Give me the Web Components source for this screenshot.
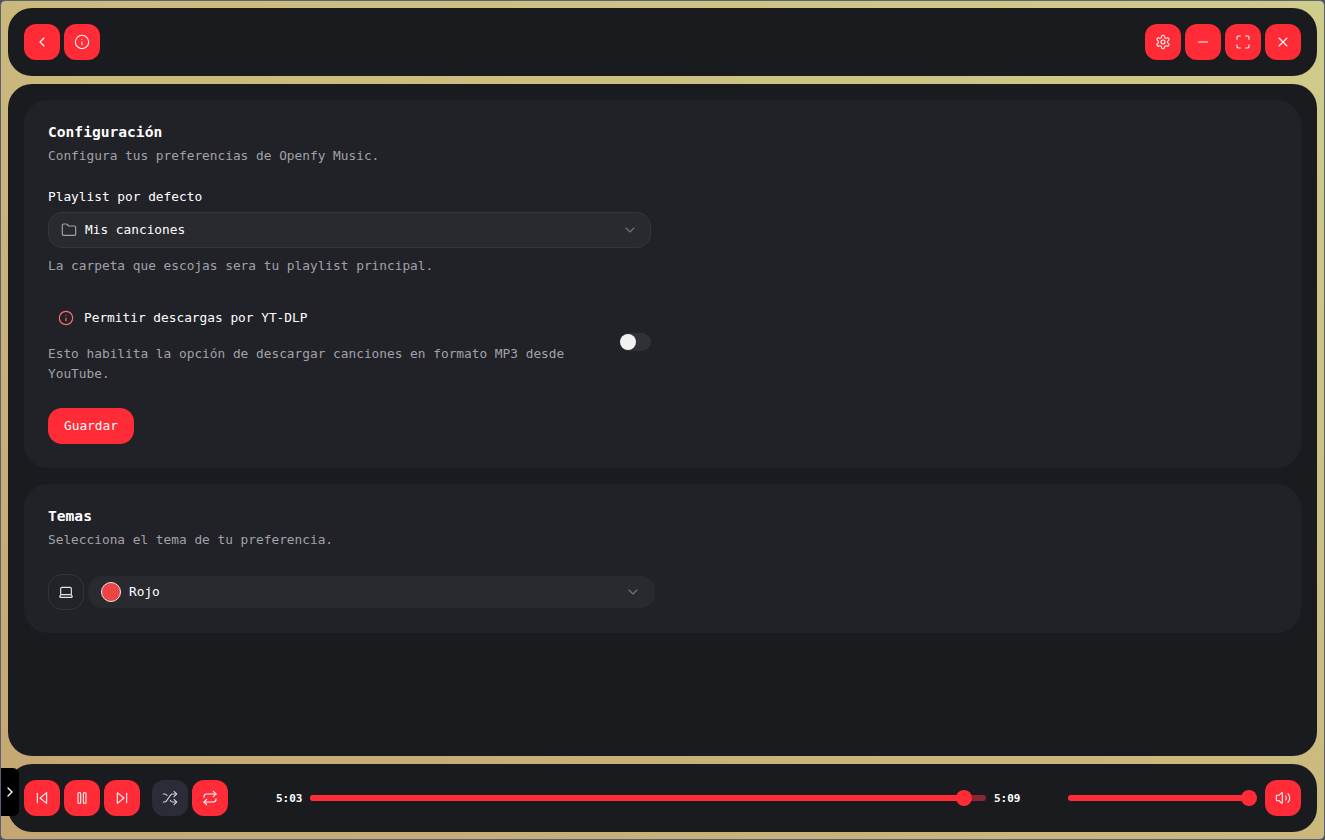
<!DOCTYPE html>
<html lang="es">
<head>
<meta charset="utf-8">
<title>Openfy Music</title>
<style>
  html, body { margin: 0; height: 100%; background: #4a4f6a; overflow: hidden; }
  body { font-family: "DejaVu Sans Mono", "Liberation Mono", monospace; font-size: 12.8px; }
</style>
</head>
<body>
<app-window>
  <top-bar slot="top"></top-bar>
  <div slot="main" style="display:contents">
    <settings-card heading="Configuración" description="Configura tus preferencias de Openfy Music.">
      <config-form></config-form>
    </settings-card>
    <settings-card heading="Temas" description="Selecciona el tema de tu preferencia." style="padding-bottom:23px">
      <theme-picker></theme-picker>
    </settings-card>
  </div>
  <player-bar slot="bottom"></player-bar>
</app-window>

<script>
  // lucide style icons, 24 grid
  const ICONS = {
    back: '<path d="m15 18-6-6 6-6"/>',
    forward: '<path d="m9 18 6-6-6-6"/>',
    down: '<path d="m6 9 6 6 6-6"/>',
    info: '<circle cx="12" cy="12" r="10"/><path d="M12 16v-4"/><path d="M12 8h.01"/>',
    gear: '<path d="M12.22 2h-.44a2 2 0 0 0-2 2v.18a2 2 0 0 1-1 1.73l-.43.25a2 2 0 0 1-2 0l-.15-.08a2 2 0 0 0-2.73.73l-.22.38a2 2 0 0 0 .73 2.73l.15.1a2 2 0 0 1 1 1.72v.51a2 2 0 0 1-1 1.74l-.15.09a2 2 0 0 0-.73 2.73l.22.38a2 2 0 0 0 2.73.73l.15-.08a2 2 0 0 1 2 0l.43.25a2 2 0 0 1 1 1.73V20a2 2 0 0 0 2 2h.44a2 2 0 0 0 2-2v-.18a2 2 0 0 1 1-1.73l.43-.25a2 2 0 0 1 2 0l.15.08a2 2 0 0 0 2.73-.73l.22-.39a2 2 0 0 0-.73-2.73l-.15-.08a2 2 0 0 1-1-1.74v-.5a2 2 0 0 1 1-1.74l.15-.09a2 2 0 0 0 .73-2.73l-.22-.38a2 2 0 0 0-2.73-.73l-.15.08a2 2 0 0 1-2 0l-.43-.25a2 2 0 0 1-1-1.73V4a2 2 0 0 0-2-2z"/><circle cx="12" cy="12" r="3"/>',
    minus: '<path d="M5 12h14"/>',
    full: '<path d="M8 3H5a2 2 0 0 0-2 2v3"/><path d="M21 8V5a2 2 0 0 0-2-2h-3"/><path d="M3 16v3a2 2 0 0 0 2 2h3"/><path d="M16 21h3a2 2 0 0 0 2-2v-3"/>',
    close: '<path d="M18 6 6 18"/><path d="m6 6 12 12"/>',
    folder: '<path d="M20 20a2 2 0 0 0 2-2V8a2 2 0 0 0-2-2h-7.9a2 2 0 0 1-1.69-.9L9.6 3.9A2 2 0 0 0 7.93 3H4a2 2 0 0 0-2 2v13a2 2 0 0 0 2 2Z"/>',
    laptop: '<path d="M20 16V7a2 2 0 0 0-2-2H6a2 2 0 0 0-2 2v9m16 0H4m16 0 1.28 2.55a1 1 0 0 1-.9 1.45H3.62a1 1 0 0 1-.9-1.45L4 16"/>',
    prev: '<path d="M19 20 9 12l10-8v16Z"/><path d="M5 19V5"/>',
    next: '<path d="m5 4 10 8-10 8V4Z"/><path d="M19 5v14"/>',
    pause: '<rect x="14" y="4" width="4" height="16" rx="1"/><rect x="6" y="4" width="4" height="16" rx="1"/>',
    shuffle: '<path d="M2 18h1.4c1.3 0 2.5-.6 3.3-1.7l6.1-8.6c.7-1.1 2-1.7 3.3-1.7H22"/><path d="m18 2 4 4-4 4"/><path d="M2 6h1.9c1.5 0 2.9.9 3.6 2.2"/><path d="M22 18h-5.9c-1.3 0-2.6-.7-3.3-1.8l-.5-.8"/><path d="m18 14 4 4-4 4"/>',
    repeat: '<path d="m17 2 4 4-4 4"/><path d="M3 11v-1a4 4 0 0 1 4-4h14"/><path d="m7 22-4-4 4-4"/><path d="M21 13v1a4 4 0 0 1-4 4H3"/>',
    volume: '<path d="M11 4.7a.7.7 0 0 0-1.2-.5L6.4 7.6A1.4 1.4 0 0 1 5.4 8H3a1 1 0 0 0-1 1v6a1 1 0 0 0 1 1h2.4a1.4 1.4 0 0 1 1 .4l3.4 3.4a.7.7 0 0 0 1.2-.5z"/><path d="M16 9a5 5 0 0 1 0 6"/><path d="M19.4 18.4a9 9 0 0 0 0-12.8"/>'
  };

  class AppIcon extends HTMLElement {
    connectedCallback() {
      const size = this.getAttribute("size") || 16;
      this.attachShadow({ mode: "open" }).innerHTML = `
        <style>:host { display: inline-flex; flex: none; } svg { display: block; }</style>
        <svg width="${size}" height="${size}" viewBox="0 0 24 24" fill="none" stroke="currentColor"
          stroke-width="${this.getAttribute("stroke") || 2}" stroke-linecap="round" stroke-linejoin="round">${ICONS[this.getAttribute("name")]}</svg>`;
    }
  }

  class IconButton extends HTMLElement {
    connectedCallback() {
      this.attachShadow({ mode: "open" }).innerHTML = `
        <style>
          :host {
            display: flex; flex: none; width: 36px; height: 36px; box-sizing: border-box;
            align-items: center; justify-content: center;
            border-radius: 12px; background: #ff2b36; color: #fff;
          }
          :host([muted]) { background: #2a2c38; color: #d4d4d8; }
        </style>
        <app-icon name="${this.getAttribute("icon")}" size="16" stroke="1.6"></app-icon>`;
    }
  }

  class AppWindow extends HTMLElement {
    constructor() {
      super();
      this.attachShadow({ mode: "open" }).innerHTML = `
        <style>
          :host {
            display: flex; flex-direction: column; gap: 8px; box-sizing: border-box;
            height: 840px; padding: 7px; border: 1px solid #5a6076; border-radius: 5px; position: relative;
            background: linear-gradient(to top right, #c5a672, #cbb97c 50%, #cfcd8b) padding-box;
          }
          .bar { flex: none; height: 68px; border-radius: 24px; background: #1a1b1f; }
          main {
            flex: 1; min-height: 0; display: flex; flex-direction: column; gap: 16px;
            padding: 16px; border-radius: 24px; background: #1a1b1f;
          }
        </style>
        <div class="bar"><slot name="top"></slot></div>
        <main><slot name="main"></slot></main>
        <div class="bar"><slot name="bottom"></slot></div>`;
    }
  }

  class TopBar extends HTMLElement {
    constructor() {
      super();
      this.attachShadow({ mode: "open" }).innerHTML = `
        <style>
          :host { display: flex; height: 100%; align-items: center; justify-content: space-between; padding: 0 16px; box-sizing: border-box; }
          div { display: flex; gap: 4px; }
        </style>
        <div><icon-button icon="back"></icon-button><icon-button icon="info"></icon-button></div>
        <div>
          <icon-button icon="gear"></icon-button><icon-button icon="minus"></icon-button>
          <icon-button icon="full"></icon-button><icon-button icon="close"></icon-button>
        </div>`;
    }
  }

  class SettingsCard extends HTMLElement {
    connectedCallback() {
      this.attachShadow({ mode: "open" }).innerHTML = `
        <style>
          :host { display: block; padding: 24px; border-radius: 24px; background: #212227; }
          h2 { margin: 0; font-size: 14.6px; line-height: 16px; font-weight: 700; color: #fff; }
          p { margin: 8px 0 0; font-size: 12.8px; line-height: 16px; color: #a1a1aa; }
        </style>
        <h2>${this.getAttribute("heading")}</h2>
        <p>${this.getAttribute("description")}</p>
        <slot></slot>`;
    }
  }

  class ConfigForm extends HTMLElement {
    constructor() {
      super();
      this.attachShadow({ mode: "open" }).innerHTML = `
        <style>
          :host { display: block; width: 603px; padding-top: 25px; }
          label { display: block; line-height: 16px; color: #fff; }
          .select {
            display: flex; align-items: center; gap: 8px; height: 36px; box-sizing: border-box;
            margin-top: 7px; padding: 0 12px; border: 1px solid #34353b; border-radius: 14px;
            background: #292a30; color: #fff;
          }
          .select app-icon:first-child { color: #a1a1aa; }
          .select span { flex: 1; padding-bottom: 2px; }
          .select .chev { color: #71717a; }
          .hint { margin: 10px 0 0; line-height: 16px; color: #a1a1aa; }
          .row { display: flex; align-items: center; justify-content: space-between; margin-top: 26px; }
          .title { display: flex; align-items: center; gap: 10px; padding-left: 10px; line-height: 36px; color: #fff; }
          .title app-icon { color: #ff6b74; }
          .desc { margin: 8px 0 0; width: 530px; line-height: 20px; color: #a1a1aa; }
          .switch { flex: none; width: 31px; height: 18px; border-radius: 9px; background: #303137; display: flex; align-items: center; }
          .knob { width: 16px; height: 16px; border-radius: 50%; background: #f1f1f1; }
          button {
            display: block; margin-top: 24px; height: 36px; padding: 0 16px 2px; border: 0; border-radius: 14px;
            background: #ff2b36; color: #fff; font: inherit;
          }
        </style>
        <label>Playlist por defecto</label>
        <div class="select">
          <app-icon name="folder" size="16" stroke="1.75"></app-icon>
          <span>Mis canciones</span>
          <app-icon class="chev" name="down" size="16" stroke="1.75"></app-icon>
        </div>
        <p class="hint">La carpeta que escojas sera tu playlist principal.</p>
        <div class="row">
          <div>
            <div class="title"><app-icon name="info" size="16" stroke="1.75"></app-icon>Permitir descargas por YT-DLP</div>
            <p class="desc">Esto habilita la opción de descargar canciones en formato MP3 desde YouTube.</p>
          </div>
          <div class="switch"><div class="knob"></div></div>
        </div>
        <button>Guardar</button>`;
    }
  }

  class ThemePicker extends HTMLElement {
    constructor() {
      super();
      this.attachShadow({ mode: "open" }).innerHTML = `
        <style>
          :host { display: flex; align-items: center; gap: 4px; width: 607px; padding-top: 26px; }
          .mode {
            flex: none; width: 36px; height: 36px; box-sizing: border-box; display: flex; align-items: center; justify-content: center;
            border: 1px solid #34353b; border-radius: 14px; background: #222328; color: #e4e4e7;
          }
          .select {
            flex: 1; display: flex; align-items: center; gap: 8px; height: 32px; padding: 0 14px 0 13px;
            border-radius: 14px; background: #292a30; color: #fff;
          }
          .dot { width: 18px; height: 18px; border: 1px solid #e5e5e5; border-radius: 50%; background: #ef4444; }
          .select span { flex: 1; padding-bottom: 2px; }
          .chev { color: #71717a; }
        </style>
        <div class="mode"><app-icon name="laptop" size="16" stroke="1.75"></app-icon></div>
        <div class="select">
          <div class="dot"></div>
          <span>Rojo</span>
          <app-icon class="chev" name="down" size="16" stroke="1.75"></app-icon>
        </div>`;
    }
  }

  class SlideBar extends HTMLElement {
    connectedCallback() {
      const pct = this.getAttribute("value");
      this.attachShadow({ mode: "open" }).innerHTML = `
        <style>
          :host { display: block; position: relative; height: 6px; border-radius: 3px; background: #8a2730; }
          .fill { height: 100%; border-radius: 3px; background: #ff2b36; }
          .thumb {
            position: absolute; top: 50%; width: 16px; height: 16px; border-radius: 50%;
            background: #ff2b36; transform: translate(-50%, -50%);
          }
        </style>
        <div class="fill" style="width:${pct}%"></div>
        <div class="thumb" style="left:${pct}%"></div>`;
    }
  }

  class PlayerBar extends HTMLElement {
    constructor() {
      super();
      this.attachShadow({ mode: "open" }).innerHTML = `
        <style>
          :host { display: flex; height: 100%; align-items: center; padding: 0 16px; box-sizing: border-box; position: relative; color: #fff; font-weight: 700; font-size: 11px; }
          .group { display: flex; gap: 4px; }
          .modes { margin-left: 12px; }
          .time { flex: none; }
          .now { margin-left: 48px; }
          .progress { flex: none; width: 676px; margin: 0 8px 0 7.5px; }
          .total { margin-right: 47.5px; }
          .volume { flex: none; width: 181px; margin-right: 16px; }
          .tab {
            position: absolute; left: -7px; top: 4px; width: 18px; height: 48px; border-radius: 0 6px 6px 0;
            background: #000; display: flex; align-items: center; justify-content: center; color: #fff;
          }
        </style>
        <div class="tab"><app-icon name="forward" size="16"></app-icon></div>
        <div class="group">
          <icon-button icon="prev"></icon-button><icon-button icon="pause"></icon-button><icon-button icon="next"></icon-button>
        </div>
        <div class="group modes">
          <icon-button icon="shuffle" muted></icon-button><icon-button icon="repeat"></icon-button>
        </div>
        <span class="time now">5:03</span>
        <slide-bar class="progress" value="96.7"></slide-bar>
        <span class="time total">5:09</span>
        <slide-bar class="volume" value="100"></slide-bar>
        <icon-button icon="volume"></icon-button>`;
    }
  }

  customElements.define("app-icon", AppIcon);
  customElements.define("icon-button", IconButton);
  customElements.define("app-window", AppWindow);
  customElements.define("top-bar", TopBar);
  customElements.define("settings-card", SettingsCard);
  customElements.define("config-form", ConfigForm);
  customElements.define("theme-picker", ThemePicker);
  customElements.define("slide-bar", SlideBar);
  customElements.define("player-bar", PlayerBar);
</script>
</body>
</html>
